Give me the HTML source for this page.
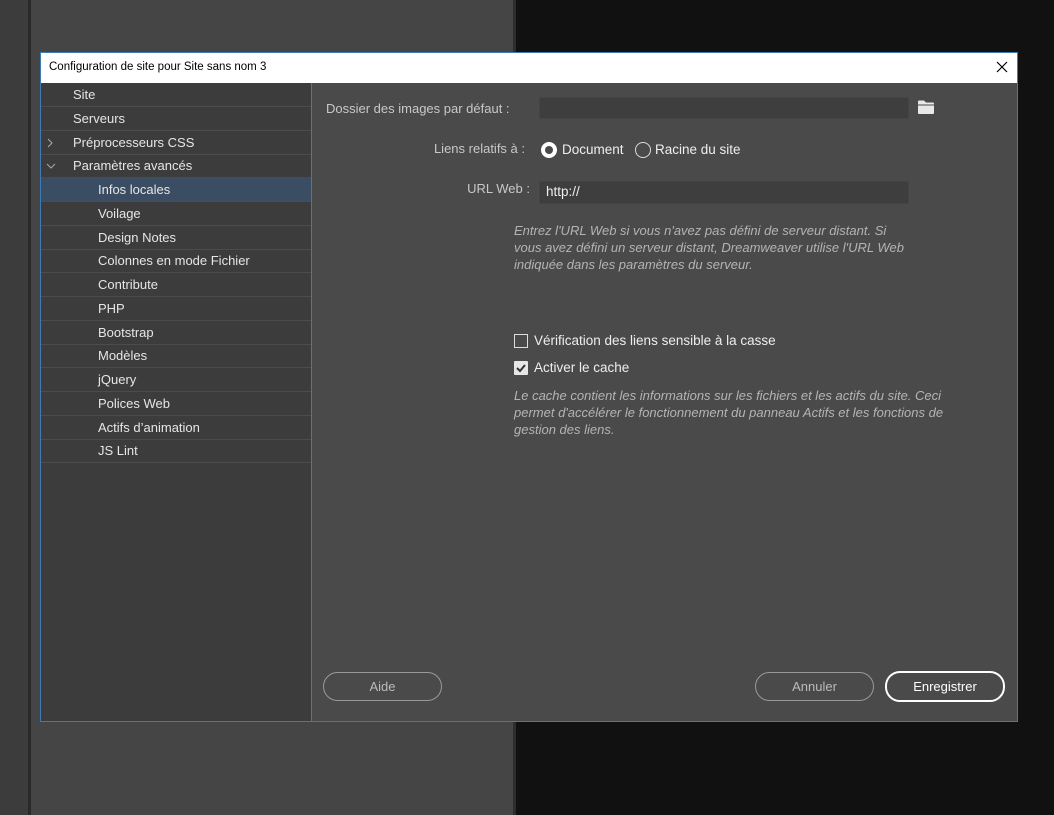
<!DOCTYPE html>
<html><head><meta charset="utf-8"><style>
*{margin:0;padding:0;box-sizing:border-box}
body{width:1054px;height:815px;position:relative;overflow:hidden;background:#111;font-family:"Liberation Sans",sans-serif;}
.a{position:absolute}
.side li{list-style:none;position:absolute;left:0;width:270px;height:24px;border-bottom:1px solid #4c4c4c;color:#e6e6e6;font-size:13px;line-height:23px;}
.lbl{color:#c8c8c8;font-size:13px;text-align:right;width:200px}
.inp{background:#3e3e3e;border:1px solid #444;border-radius:2px}
.it{color:#b4b4b4;font-style:italic;font-size:13px;line-height:17px}
.btn{border-radius:15px;height:29px;text-align:center;line-height:27px;font-size:13px}
</style></head><body>
<div class="a" style="left:0;top:0;width:28px;height:815px;background:#3c3c3c"></div>
<div class="a" style="left:28px;top:0;width:3px;height:815px;background:#2a2a2a"></div>
<div class="a" style="left:31px;top:0;width:482px;height:815px;background:#454545"></div>
<div class="a" style="left:513px;top:0;width:3px;height:815px;background:#2e2e2e"></div>

<div class="a" style="left:40px;top:52px;width:978px;height:670px;border:1px solid #3d7bb5;background:#4a4a4a"></div>
<div class="a" style="left:41px;top:53px;width:976px;height:30px;background:#fff"></div>
<div class="a" style="left:49px;top:61px;font-size:11.5px;color:#000">Configuration de site pour Site sans nom 3</div>
<svg class="a" style="left:996px;top:61px" width="12" height="12"><path d="M1 1l10 10M11 1L1 11" stroke="#000" stroke-width="1.2"/></svg>

<div class="a" style="left:41px;top:83px;width:270px;height:638px;background:#3c3c3c"></div>
<div class="a" style="left:311px;top:83px;width:1px;height:638px;background:#3d7bb5"></div>
<ul class="a side" style="left:41px;top:83px">
<li style="top:0;padding-left:32px">Site</li>
<li style="top:24px;padding-left:32px">Serveurs</li>
<li style="top:48px;padding-left:32px"><svg class="a" style="left:6px;top:7px" width="6" height="10"><path d="M1 1l4 4-4 4" stroke="#aaa" fill="none"/></svg>Préprocesseurs CSS</li>
<li style="top:71px;padding-left:32px"><svg class="a" style="left:5px;top:9px" width="10" height="6"><path d="M1 1l4 4 4-4" stroke="#aaa" fill="none"/></svg>Paramètres avancés</li>
<li style="top:95px;padding-left:57px;background:#3b4d63">Infos locales</li>
<li style="top:119px;padding-left:57px">Voilage</li>
<li style="top:143px;padding-left:57px">Design Notes</li>
<li style="top:166px;padding-left:57px">Colonnes en mode Fichier</li>
<li style="top:190px;padding-left:57px">Contribute</li>
<li style="top:214px;padding-left:57px">PHP</li>
<li style="top:238px;padding-left:57px">Bootstrap</li>
<li style="top:261px;padding-left:57px">Modèles</li>
<li style="top:285px;padding-left:57px">jQuery</li>
<li style="top:309px;padding-left:57px">Polices Web</li>
<li style="top:333px;padding-left:57px">Actifs d’animation</li>
<li style="top:356px;padding-left:57px">JS Lint</li>
</ul>

<div class="a lbl" style="left:326px;top:101px;text-align:left">Dossier des images par défaut :</div>
<div class="a inp" style="left:539px;top:97px;width:370px;height:22px"></div>
<svg class="a" style="left:917px;top:99px" width="18" height="16" viewBox="0 0 18 16"><path d="M1 2.5Q1 1.5 2 1.5h5l2 2h7q1 0 1 1V14q0 1-1 1H2q-1 0-1-1z" fill="#e8e8e8"/><path d="M1 6h16" stroke="#4a4a4a" stroke-width="1"/></svg>

<div class="a lbl" style="left:325px;top:141px">Liens relatifs à :</div>
<div class="a" style="left:541px;top:142px;width:16px;height:16px;border-radius:50%;border:4px solid #fff"></div>
<div class="a" style="left:562px;top:142px;color:#eee;font-size:13.5px">Document</div>
<div class="a" style="left:635px;top:142px;width:16px;height:16px;border-radius:50%;border:1px solid #ddd"></div>
<div class="a" style="left:655px;top:142px;color:#eee;font-size:13.5px">Racine du site</div>

<div class="a lbl" style="left:330px;top:181px">URL Web :</div>
<div class="a inp" style="left:539px;top:181px;width:370px;height:23px"></div>
<div class="a" style="left:546px;top:184px;color:#eee;font-size:13.5px">http://</div>

<div class="a it" style="left:514px;top:222px;width:400px">Entrez l'URL Web si vous n'avez pas défini de serveur distant. Si<br>vous avez défini un serveur distant, Dreamweaver utilise l'URL Web<br>indiquée dans les paramètres du serveur.</div>

<div class="a" style="left:514px;top:334px;width:14px;height:14px;border:1px solid #ddd"></div>
<div class="a" style="left:534px;top:333px;color:#eee;font-size:13.5px">Vérification des liens sensible à la casse</div>
<div class="a" style="left:514px;top:361px;width:14px;height:14px;background:#e6e6e6;border-radius:1px"></div>
<svg class="a" style="left:514px;top:361px" width="14" height="14"><path d="M3 7l3 3 5-6" stroke="#333" stroke-width="2" fill="none"/></svg>
<div class="a" style="left:534px;top:360px;color:#eee;font-size:13.5px">Activer le cache</div>
<div class="a it" style="left:514px;top:387px;width:490px">Le cache contient les informations sur les fichiers et les actifs du site. Ceci<br>permet d'accélérer le fonctionnement du panneau Actifs et les fonctions de<br>gestion des liens.</div>

<div class="a btn" style="left:323px;top:672px;width:119px;border:1px solid #999;color:#bbb">Aide</div>
<div class="a btn" style="left:755px;top:672px;width:119px;border:1px solid #999;color:#bbb">Annuler</div>
<div class="a btn" style="left:885px;top:671px;width:120px;height:31px;border:2px solid #fff;color:#fff">Enregistrer</div>
</body></html>
